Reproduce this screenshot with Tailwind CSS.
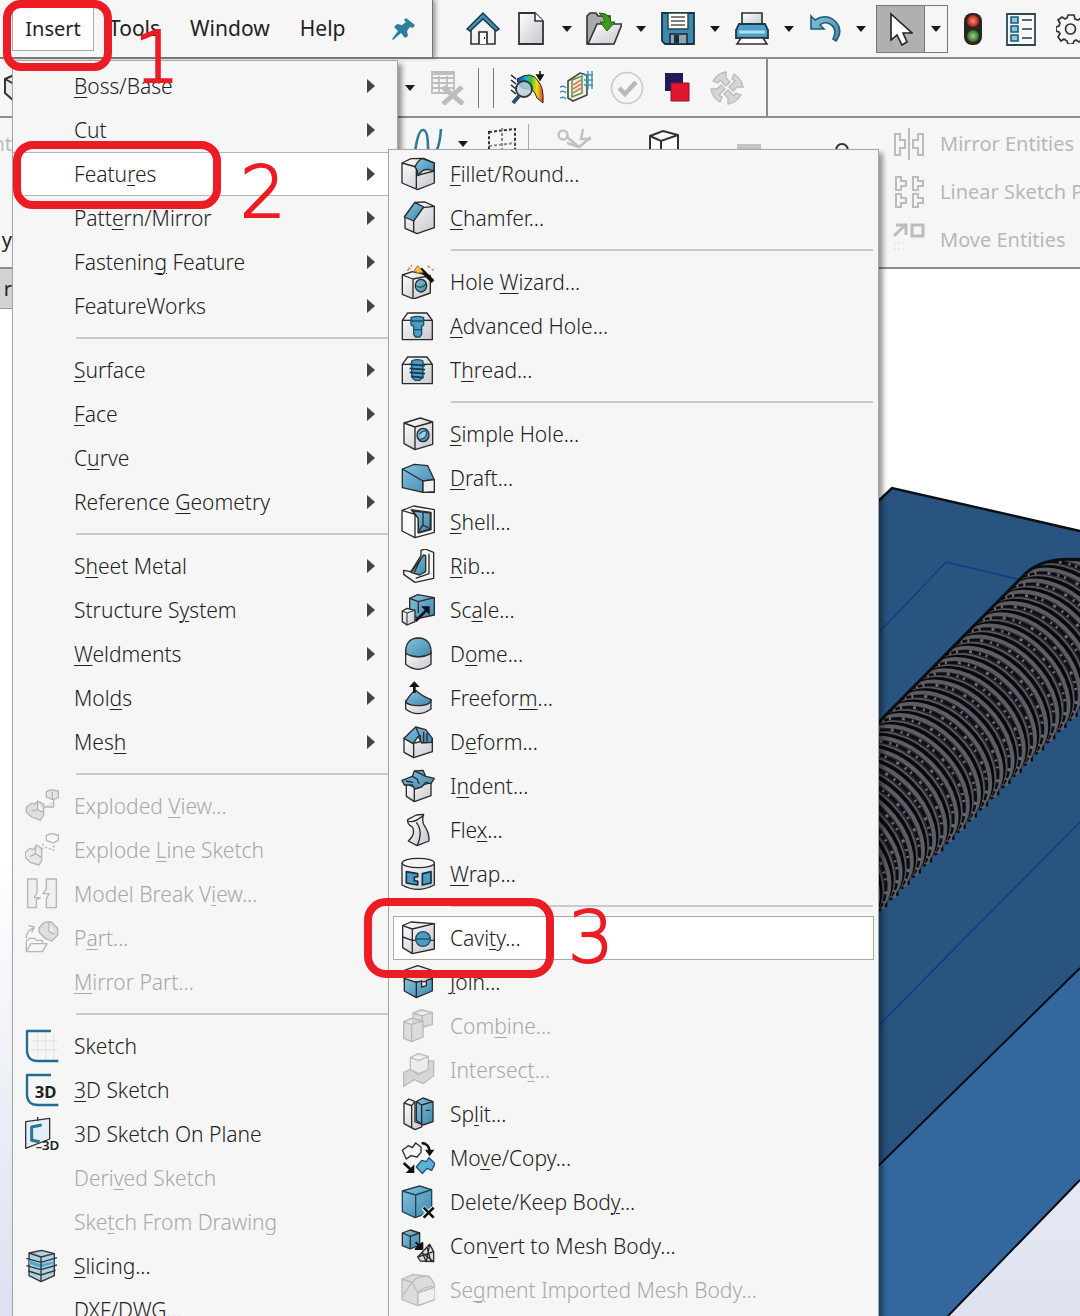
<!DOCTYPE html>
<html lang="en">
<head>
<meta charset="utf-8">
<meta name="viewport" content="width=device-width, initial-scale=1">
<title>Insert menu</title>
<script src="https://cdn.jsdelivr.net/npm/@tailwindcss/browser@4"></script>
</head>
<body class="bg-white">
<svg class="absolute size-0" aria-hidden="true">
  <defs>
    <linearGradient id="gb" x1="0" y1="0" x2="1" y2="1"><stop offset="0" stop-color="#86c2df"/><stop offset="1" stop-color="#3f88ad"/></linearGradient>
    <linearGradient id="gw" x1="0" y1="0" x2="1" y2="1"><stop offset="0" stop-color="#ffffff"/><stop offset="1" stop-color="#c6c6cd"/></linearGradient>
    <linearGradient id="rainbow"><stop offset="0" stop-color="#1d2fa8"/><stop offset=".35" stop-color="#18b7c9"/><stop offset=".55" stop-color="#3ec22e"/><stop offset=".75" stop-color="#f5dc1a"/><stop offset="1" stop-color="#ee3a1b"/></linearGradient>
    <radialGradient id="red"><stop offset="0" stop-color="#ff8a7a"/><stop offset="1" stop-color="#a81f16"/></radialGradient>
    <radialGradient id="green"><stop offset="0" stop-color="#9fd08e"/><stop offset="1" stop-color="#2c6b25"/></radialGradient>
    <symbol id="down" viewBox="0 0 10 6"><path d="M0 0h10L5 6z" fill="#1a1a1a" stroke="none"/></symbol>
    <symbol id="sub" viewBox="0 0 8 14"><path d="M0 0L8 7L0 14z" fill="#444" stroke="none"/></symbol>
  </defs>
</svg>

<div class="relative h-screen overflow-hidden bg-white font-['Noto_Sans',sans-serif] text-[20px] leading-none text-[#222]">

  <!-- Graphics area -->
  <main class="absolute inset-0 bg-linear-to-b from-white from-65% to-[#dde1f0]">
    <svg class="absolute top-0 left-0 h-[1316px] w-[1080px] overflow-hidden" viewBox="0 0 1080 1316" fill="none">
      <path d="M870 509L892 488L1080 531V968L870 1174z" fill="#29547f"/>
      <path d="M870 509L892 488L1080 531" stroke="#0b0f16" stroke-width="2.5"/>
      <path d="M870 1174L1080 968V1180L948 1316H870z" fill="#33679e"/>
      <path d="M870 1174L1080 968M948 1316L1080 1180" stroke="#080c12" stroke-width="2"/>
      <path d="M870 642L946 562L1030 582M870 1034L1080 822" stroke="#123c86" stroke-width="1.5"/>
      <path d="M870 732L1030 571Q1050 556 1080 560V703L870 910z" fill="#1b1c22"/>
      <g id="coil"></g>
      <path d="M870 731L1026 573Q1046 556 1080 560" stroke="#0c0d11" stroke-width="3"/>
    </svg>
  </main>

  <header class="relative">
    <!-- Menu bar and standard toolbar -->
    <div class="flex h-[59px] border-b-2 border-[#8c8c8c] bg-[#f6f6f6]">
      <nav class="flex h-[58px] w-[433px] shrink-0 items-center border-r border-b border-[#777] pl-3 text-[21px] shadow-[3px_0_4px_#0005]">
        <button class="h-11 w-[82px] border border-[#aaa] bg-white text-[20px]">Insert</button>
        <button class="px-[15px]">Tools</button>
        <button class="px-[15px]">Window</button>
        <button class="px-[15px]">Help</button>
        <button class="mr-4 ml-auto" aria-label="Pin menu"><svg class="size-6" viewBox="0 0 24 24" fill="#2d7f9f"><path d="M14 1L23 8L21 11L18 10L15 14L16 19L13 21L9 16L1 23L0 22L6 14L2 10L5 7L10 8L14 5L12 3z"/></svg></button>
      </nav>
      <div class="flex grow items-center gap-3.5 overflow-hidden pl-[33px] [&_button]:shrink-0">
        <button aria-label="Home"><svg class="size-[34px]" viewBox="0 0 34 34" fill="none"><path d="M5 16V32H29V16L17 6z" fill="#f2f2f2" stroke="#333" stroke-width="1.6"/><path d="M13 32V20H21V32" fill="#fff" stroke="#222" stroke-width="1.6"/><path d="M18 26h1" stroke="#222" stroke-width="2"/><path d="M1 17L17 1L33 17L30 19L17 7L4 19z" fill="#438fb4" stroke="#16384a" stroke-width="1.4"/></svg></button>
        <button aria-label="New"><svg class="size-[34px]" viewBox="0 0 34 34"><path d="M5 1H21L29 9V32H5z" fill="url(#gw)" stroke="#333" stroke-width="1.8"/><path d="M21 1V9H29" fill="#fff" stroke="#333" stroke-width="1.6"/></svg></button>
        <button aria-label="New options"><svg class="h-1.5 w-2.5"><use href="#down"/></svg></button>
        <button aria-label="Open"><svg class="h-[34px] w-9" viewBox="0 0 36 34"><path d="M1 32V4L4 1H10L12 4H24V32z" fill="#aaa" stroke="#333" stroke-width="1.6"/><path d="M2 32L11 12H36L28 32z" fill="url(#gw)" stroke="#333" stroke-width="1.6"/><path d="M13 1Q24 1 25 10H29L21 19L14 10H19Q18 4 13 1z" fill="#3d9a1f" stroke="#1f6210"/></svg></button>
        <button aria-label="Open options"><svg class="h-1.5 w-2.5"><use href="#down"/></svg></button>
        <button aria-label="Save"><svg class="h-[34px] w-9" viewBox="0 0 36 34"><path d="M2 1H34V32H5L2 29z" fill="#4089ae" stroke="#173344" stroke-width="1.8"/><path d="M8 1H28V17H8z" fill="#fff" stroke="#244" stroke-width="1.4"/><path d="M11 5H25M11 9H25M11 13H25" stroke="#555" stroke-width="1.5"/><path d="M10 22H27V32H10z" fill="#8fa5b0" stroke="#122a38" stroke-width="1.5"/><path d="M14 23H19V31H14z" fill="#1c2e3a"/></svg></button>
        <button aria-label="Save options"><svg class="h-1.5 w-2.5"><use href="#down"/></svg></button>
        <button aria-label="Print"><svg class="h-[34px] w-9" viewBox="0 0 36 34"><path d="M8 14V1H28V14" fill="url(#gw)" stroke="#333" stroke-width="1.7"/><path d="M5 12H31L34 18V26H2V18z" fill="#4e9fc4" stroke="#173c50" stroke-width="1.8"/><path d="M5 20H31" stroke="#aee0f2" stroke-width="3"/><path d="M7 26H29L33 32H3z" fill="#fff" stroke="#333" stroke-width="1.6"/></svg></button>
        <button aria-label="Print options"><svg class="h-1.5 w-2.5"><use href="#down"/></svg></button>
        <button aria-label="Undo"><svg class="size-[34px]" viewBox="0 0 34 34"><path d="M3 4L7 8Q18 1 27 9Q36 18 28 29L25 27Q30 17 22 12Q16 9 12 13L16 17H3z" fill="url(#gb)" stroke="#235a76" stroke-width="1.6"/></svg></button>
        <button aria-label="Undo options"><svg class="h-1.5 w-2.5"><use href="#down"/></svg></button>
        <div class="-ml-1 flex h-12 w-[72px] shrink-0 border border-[#777]">
          <button class="grid w-12 place-items-center border-r border-[#777] bg-[#b0b0b0]" aria-label="Select"><svg class="h-[34px] w-6" viewBox="0 0 24 34"><path d="M2 2V28L8 23L13 33L18 30L14 21H23z" fill="#fff" stroke="#222" stroke-width="1.6"/></svg></button>
          <button class="grid grow place-items-center" aria-label="Select options"><svg class="h-1.5 w-2.5"><use href="#down"/></svg></button>
        </div>
        <button aria-label="Rebuild"><svg class="h-[34px] w-[22px]" viewBox="0 0 22 34"><rect x="2" y="1" width="18" height="32" rx="8" fill="#2b2420"/><circle cx="11" cy="9" r="6" fill="url(#red)"/><circle cx="11" cy="24" r="6" fill="url(#green)"/></svg></button>
        <button aria-label="Properties"><svg class="h-[34px] w-11" viewBox="0 0 44 34"><path d="M9 2H37V33H9z" fill="#f6f9fa" stroke="#2f4550" stroke-width="1.8"/><path d="M13 5H20V11H13zM13 14H20V20H13zM13 23H20V29H13z" fill="#8bc6de" stroke="#1c5a78" stroke-width="1.6"/><path d="M24 8H34M24 17H34M24 26H34" stroke="#333" stroke-width="1.6"/></svg></button>
        <button aria-label="Options"><svg class="size-[30px]" viewBox="0 0 30 30" fill="none" stroke="#333" stroke-width="1.7"><path d="M12 1H18L19 5L22 6L25 4L28 8L26 11L27 13L30 14V18L26 19L25 22L27 25L23 28L20 26L18 27L17 30H12L11 27L8 25L5 27L2 23L4 20L3 18L0 17V13L3 12L4 9L2 6L6 3L9 5L11 4z"/><circle cx="14.500" cy="15" r="5"/></svg></button>
      </div>
    </div>

    <!-- Secondary toolbar -->
    <div class="flex h-[59px] items-center gap-4 border-b-2 border-[#8c8c8c] bg-[#f6f6f6] pl-1 [&_button]:shrink-0">
      <button class="w-[385px]" aria-label="Body"><svg class="h-7 w-6" viewBox="0 0 24 28" fill="#ececec" stroke="#333" stroke-width="2"><path d="M1 5L10 1L22 5V22L10 27L1 19zM1 5L10 10"/></svg></button>
      <button aria-label="Display options"><svg class="h-1.5 w-2.5"><use href="#down"/></svg></button>
      <button disabled aria-label="Delete table"><svg class="size-[34px]" viewBox="0 0 34 34" fill="none" stroke="#bdbdbd" stroke-width="1.8"><path d="M1 1H23V22H1zM1 7H23M1 12H23M1 17H23M8 5V22M16 5V22M2 3H22"/><path d="M12 16L32 33M31 16L12 33" stroke-width="5"/></svg></button>
      <div class="-ml-[3px] h-10 w-4 shrink-0 border-x border-[#777]"></div>
      <button aria-label="Curvature"><svg class="size-[34px]" viewBox="0 0 34 34" fill="none"><path d="M7 8Q22 -1 28 10Q34 16 33 32L27 27Q24 17 17 18Q9 18 7 8z" fill="url(#rainbow)" stroke="#222"/><path d="M1 4L6 8M1 9L6 13M1 14L6 18M1 19L6 23" stroke="#222" stroke-width="1.6"/><circle cx="14" cy="18" r="8" fill="#b9d2dfcc" stroke="#333" stroke-width="1.8"/><path d="M9 25L3 32" stroke="#1d5270" stroke-width="4"/><path d="M30 0V6M27 4H33L30 9z" stroke="#111" stroke-width="1.6" fill="#111"/></svg></button>
      <button aria-label="Flow simulation"><svg class="size-[34px]" viewBox="0 0 34 34" fill="none"><path d="M8 10L20 2L27 4V24L13 30L8 27z" fill="#f4eee4" stroke="#444" stroke-width="1.6"/><path d="M12 9L22 5V22L12 26z" stroke="#4b9a3e" stroke-width="1.5"/><path d="M13 14L21 9M13 18L21 13M13 22L21 17" stroke="#e07060" stroke-width="1.6"/><path d="M24 4H33M24 9H33M24 14H33M28 0V18M32 0V18M0 16Q4 14 6 17M0 21Q4 19 6 22M0 27Q4 25 6 28" stroke="#3b93bd" stroke-width="1.5"/></svg></button>
      <button disabled aria-label="Check"><svg class="size-[34px]" viewBox="0 0 34 34" fill="none"><circle cx="17" cy="17" r="15.500" stroke="#c9c9c9" stroke-width="1.6"/><path d="M9 17L15 23L26 11" stroke="#b9b9b9" stroke-width="4.500"/></svg></button>
      <button aria-label="Compare"><svg class="size-[34px]" viewBox="0 0 34 34"><path d="M5 2H23V20H5z" fill="#1f1a5c"/><path d="M11 12H29V30H11z" fill="#e0162f" stroke="#8c1230"/></svg></button>
      <button disabled aria-label="Update"><svg class="size-[34px]" viewBox="0 0 34 34" fill="#d6d6d6" stroke="#bcbcbc" stroke-width="1.4"><path d="M3 10Q8 2 16 1V7L20 11L16 15L10 9L8 12zM24 3Q32 8 33 16H27L23 20L19 16L25 10L22 8zM31 24Q26 32 18 33V27L14 23L18 19L24 25L26 22zM10 31Q2 26 1 18H7L11 14L15 18L9 24L12 26z"/></svg></button>
      <div class="ml-1.5 h-full border-l-2 border-[#8c8c8c]"></div>
    </div>

    <!-- Sketch ribbon -->
    <div class="flex h-[151px] items-start border-b-2 border-[#8c8c8c] bg-[#f6f6f6] pt-0.5">
      <div class="flex w-3 shrink-0 flex-col items-end overflow-hidden whitespace-nowrap [&>span]:h-12 [&>span]:leading-[48px]"><span class="text-[#bbb]">nt</span><span></span><span>y</span></div>
      <div class="flex h-12 w-[839px] shrink-0 items-center pl-[402px] [&>*]:shrink-0">
        <svg class="h-8 w-[30px]" viewBox="0 0 30 32" fill="none" stroke="#2b7a9c" stroke-width="2.600"><path d="M1 24Q4 2 9 2Q14 2 14 20Q16 32 22 24Q26 16 27 1"/></svg>
        <svg class="ml-3.5 h-1.5 w-2.5"><use href="#down"/></svg>
        <svg class="ml-5 h-8 w-7" viewBox="0 0 28 32" fill="none" stroke="#333" stroke-width="2" stroke-dasharray="3 2"><path d="M1 4L27 1V30H1z"/><path d="M14 0V30M1 18L27 15" stroke="#888"/></svg>
        <div class="ml-3 h-10 border-l border-[#aaa]"></div>
        <svg class="ml-7 size-[34px]" viewBox="0 0 34 34" fill="none" stroke="#c2c2c2" stroke-width="2.500"><circle cx="6" cy="8" r="4.500"/><path d="M10 10L22 20L34 10M26 2L24 12H34M22 20L10 16"/></svg>
        <svg class="ml-[58px] h-7 w-[30px]" viewBox="0 0 30 28" fill="#fdfdfd" stroke="#333" stroke-width="2"><path d="M1 6L14 1L29 5V26H1zM1 6L12 11L29 5M12 11V26"/></svg>
        <svg class="ml-[58px] h-4 w-6" viewBox="0 0 24 16" fill="#c4c4c4"><path d="M0 8H24V16H0z"/></svg>
        <svg class="ml-[74px] h-4 w-3.5" viewBox="0 0 14 16" fill="none" stroke="#333" stroke-width="2"><path d="M1 14Q2 8 7 8Q12 8 13 14"/></svg>
      </div>
      <div class="ml-[41px] flex flex-col overflow-hidden whitespace-nowrap text-[#b8b8b8] [&>button]:flex [&>button]:h-12 [&>button]:items-center [&>button]:gap-3.5 [&_svg]:size-[34px] [&_svg]:shrink-0">
        <button disabled><svg viewBox="0 0 34 34" fill="none" stroke="#bcbcbc" stroke-width="2"><path d="M17 1V33M3 7H8V13H13V21H8V28H3zM31 7H26V13H21V21H26V28H31z"/></svg>Mirror Entities</button>
        <button disabled><svg viewBox="0 0 34 34" fill="none" stroke="#bcbcbc" stroke-width="2"><path d="M4 2H9V6H14V11H9V15H4zM21 2H26V6H31V11H26V15H21zM4 19H9V23H14V28H9V32H4zM21 19H26V23H31V28H26V32H21z"/></svg>Linear Sketch Pattern</button>
        <button disabled><svg viewBox="0 0 34 34" fill="none" stroke="#bcbcbc" stroke-width="3"><path d="M2 13L12 3M4 2H14V12M20 2H31V13H20z"/><path d="M2 20H13M2 26H13" stroke="#e6e6e6" stroke-width="1.500" stroke-dasharray="2 2"/></svg>Move Entities</button>
      </div>
    </div>
    <div class="h-10 w-3 border-b border-[#999] bg-[#d2d2d2] text-right leading-10">r</div>
  </header>

  <!-- Insert menu -->
  <div role="menu" aria-label="Insert" class="absolute top-[60px] left-3 w-[386px] border border-[#a5a5a5] bg-[#f6f6f6] fill-none stroke-[#b5b5b5] stroke-3 pt-[3px] text-[21px] font-light shadow-[4px_4px_5px_#0006] [stroke-linejoin:round] [&>button]:grid [&>button]:h-11 [&>button]:w-full [&>button]:grid-cols-[61px_1fr_auto] [&>button]:items-center [&>button]:text-left [&_button:disabled]:text-[#a8a8a8] [&_hr]:my-[9px] [&_hr]:ml-[63px] [&_hr]:border-t-2 [&_hr]:border-[#cacaca] [&_span]:col-start-2 [&_u]:decoration-1 [&_u]:underline-offset-3">
    <button><span><u>B</u>oss/Base</span><svg class="mr-[22px] h-3.5 w-2"><use href="#sub"/></svg></button>
    <button><span>Cut</span><svg class="mr-[22px] h-3.5 w-2"><use href="#sub"/></svg></button>
    <button class="border-y border-[#b5b5b5] bg-white"><span>Featu<u>r</u>es</span><svg class="mr-[22px] h-3.5 w-2"><use href="#sub"/></svg></button>
    <button><span>Patt<u>e</u>rn/Mirror</span><svg class="mr-[22px] h-3.5 w-2"><use href="#sub"/></svg></button>
    <button><span>Fastenin<u>g</u> Feature</span><svg class="mr-[22px] h-3.5 w-2"><use href="#sub"/></svg></button>
    <button><span>FeatureWorks</span><svg class="mr-[22px] h-3.5 w-2"><use href="#sub"/></svg></button>
    <hr>
    <button><span><u>S</u>urface</span><svg class="mr-[22px] h-3.5 w-2"><use href="#sub"/></svg></button>
    <button><span><u>F</u>ace</span><svg class="mr-[22px] h-3.5 w-2"><use href="#sub"/></svg></button>
    <button><span>C<u>u</u>rve</span><svg class="mr-[22px] h-3.5 w-2"><use href="#sub"/></svg></button>
    <button><span>Reference <u>G</u>eometry</span><svg class="mr-[22px] h-3.5 w-2"><use href="#sub"/></svg></button>
    <hr>
    <button><span>S<u>h</u>eet Metal</span><svg class="mr-[22px] h-3.5 w-2"><use href="#sub"/></svg></button>
    <button><span>Structure S<u>y</u>stem</span><svg class="mr-[22px] h-3.5 w-2"><use href="#sub"/></svg></button>
    <button><span><u>W</u>eldments</span><svg class="mr-[22px] h-3.5 w-2"><use href="#sub"/></svg></button>
    <button><span>Mol<u>d</u>s</span><svg class="mr-[22px] h-3.5 w-2"><use href="#sub"/></svg></button>
    <button><span>Mes<u>h</u></span><svg class="mr-[22px] h-3.5 w-2"><use href="#sub"/></svg></button>
    <hr>
    <button disabled><svg class="ml-3 size-[34px]" viewBox="0 0 102 102"><path d="M4 55L20 42L30 46L38 36L56 46V78L46 94L20 84L4 70zM38 36V62L56 70M20 66L38 62" fill="#dedede" stroke-width="4"/><path d="M64 8L76 2L100 6V26L84 32L64 24zM82 8V30M86 34V54H58" stroke-width="4" fill="#e6e6e6"/></svg><span>Exploded <u>V</u>iew...</span></button>
    <button disabled><svg class="ml-3 size-[34px]" viewBox="0 0 102 102"><path d="M1 58L16 46L26 50L34 36L50 46V82L42 96L16 88L1 74zM32 40V62L50 74M16 70L32 62" fill="#e8e8e8" stroke-width="4"/><path d="M64 8L76 2L100 6V22L84 30L64 22z" stroke-width="4"/><path d="M54 32V48M60 42L86 52V32" stroke-width="4" stroke-dasharray="7 5"/></svg><span>Explode <u>L</u>ine Sketch</span></button>
    <button disabled><svg class="ml-3 size-[34px]" viewBox="0 0 102 102"><path d="M8 6H36V48L28 62H46L34 68V92H8zM94 6H64V36L54 50H72L64 66V92H94z" stroke-width="4" fill="#f0f0f0"/></svg><span>Model Break V<u>i</u>ew...</span></button>
    <button disabled><svg class="ml-3 size-[34px]" viewBox="0 0 102 102"><path d="M42 20L58 4L78 2L98 22V42L80 60L60 52L42 34zM72 4V30L88 40" fill="#dedede" stroke-width="4"/><path d="M4 92V60L14 52H30L34 58H52V68H66L52 92zM6 88L18 68H52M4 52Q4 28 24 22M10 14L28 18L20 34" stroke-width="4"/></svg><span>P<u>a</u>rt...</span></button>
    <button disabled><span><u>M</u>irror Part...</span></button>
    <hr>
    <button><svg class="ml-3 size-[34px]" viewBox="0 0 102 102"><path d="M38 12V84M62 12V90M86 12V90M20 36H98M20 62H98" stroke="#e0e0e4" stroke-width="3"/><path d="M78 6H6V66Q8 96 38 96H100" stroke="#216d92" stroke-width="7"/></svg><span>Sketch</span></button>
    <button><svg class="ml-3 size-[34px]" viewBox="0 0 102 102"><path d="M78 6H6V66Q8 96 38 96H100" stroke="#216d92" stroke-width="7"/><text x="29" y="74" class="fill-[#222] stroke-none font-['Noto_Sans'] text-[50px] font-bold">3D</text></svg><span><u>3</u>D Sketch</span></button>
    <button><svg class="ml-3 size-[34px] overflow-visible" viewBox="0 0 102 102"><path d="M2 14L74 4V66L2 94z" fill="#e2eff6" stroke="#333" stroke-width="4"/><path d="M50 24L20 30V70L44 74" stroke="#2b7395" stroke-width="9"/><path d="M38 0V12M34 92H50" stroke="#333" stroke-width="4"/><text x="51" y="98" class="fill-[#222] stroke-none font-['Noto_Sans'] text-[40px] font-semibold">3D</text></svg><span>3D Sketch On Plane</span></button>
    <button disabled><span>Deri<u>v</u>ed Sketch</span></button>
    <button disabled><span>Ske<u>t</u>ch From Drawing</span></button>
    <button><svg class="ml-3 size-[34px]" viewBox="0 0 102 102"><path d="M12 12L50 4L88 14V80L48 98L12 80z" fill="#b5cfdd" stroke="#333" stroke-width="4"/><path d="M12 34L48 46L88 36V42L48 56L12 44z" fill="#5aa7cb" stroke="none"/><path d="M12 12L48 24L88 14M48 24V98M4 28L48 40L96 26M4 50L48 62L96 48M10 66L48 78L92 64" stroke="#263c48" stroke-width="4"/></svg><span><u>S</u>licing...</span></button>
    <button><span>DXF/DWG...</span></button>
  </div>

  <!-- Features submenu -->
  <div role="menu" aria-label="Features" class="absolute top-[149px] left-[388px] h-[1200px] w-[491px] border border-[#a5a5a5] bg-[#f6f6f6] fill-none stroke-[#2b2b2b] stroke-4 pt-0.5 text-[21px] font-light shadow-[4px_4px_5px_#0006] [stroke-linejoin:round] [&>button]:grid [&>button]:h-11 [&>button]:items-center [&>button]:text-left [&_button:disabled]:text-[#a8a8a8] [&_hr]:my-[9px] [&_hr]:mr-[5px] [&_hr]:ml-[62px] [&_hr]:border-t-2 [&_hr]:border-[#cacaca] [&_u]:decoration-1 [&_u]:underline-offset-3">
    <button class="w-full grid-cols-[61px_1fr]"><svg class="ml-3 size-[34px]" viewBox="0 0 102 102"><path d="M3 18L30 5L68 4L100 18V78L50 98L3 78z" fill="url(#gw)"/><path d="M3 18L46 30V96M46 56L100 42"/><path d="M42 30Q50 10 64 5L100 18L98 42Q80 34 66 40L50 56Q52 40 42 30z" fill="url(#gb)"/></svg><span><u>F</u>illet/Round...</span></button>
    <button class="w-full grid-cols-[61px_1fr]"><svg class="ml-3 size-[34px]" viewBox="0 0 102 102"><path d="M42 4L72 3L100 16V80L48 98L12 82V46z" fill="url(#gw)"/><path d="M38 60V94M66 20L100 16"/><path d="M42 4L68 18L38 60L10 48z" fill="url(#gb)"/></svg><span><u>C</u>hamfer...</span></button>
    <hr>
    <button class="w-full grid-cols-[61px_1fr]"><svg class="ml-3 size-[34px]" viewBox="0 0 102 102"><path d="M4 30L34 20L88 32V84L38 102L4 88z" fill="url(#gw)"/><path d="M4 30L36 42V100M36 42L88 32"/><ellipse cx="60" cy="62" rx="17" ry="19" fill="url(#gb)"/><path d="M46 62Q60 74 76 56" stroke="#163"/><path d="M58 12L96 50" stroke="#111" stroke-width="12"/><path d="M40 16L50 2L60 14L66 22L50 24z" fill="#f5c443" stroke="#a87a18" stroke-width="3"/><path d="M22 8l6 4M30 0l2 5M80 2l6 6M92 12l6 4M18 16l6-2" stroke="#d07a40"/></svg><span>Hole <u>W</u>izard...</span></button>
    <button class="w-full grid-cols-[61px_1fr]"><svg class="ml-3 size-[34px]" viewBox="0 0 102 102"><path d="M4 34L20 12H78L94 34V92H4z" fill="url(#gw)"/><path d="M4 34H94"/><path d="M30 26Q48 18 68 26V48L62 52V76L56 84H44L38 76V52L30 48z" fill="#4b9cc2" stroke="#1d4c66"/><path d="M30 36H68M38 62H60" stroke="#1d4c66"/></svg><span><u>A</u>dvanced Hole...</span></button>
    <button class="w-full grid-cols-[61px_1fr]"><svg class="ml-3 size-[34px]" viewBox="0 0 102 102"><path d="M4 34L20 12H78L94 34V92H4z" fill="url(#gw)"/><path d="M4 34H94"/><path d="M32 24Q48 16 66 24V72L56 82H42L32 72z" fill="#4b9cc2" stroke="#1d4c66"/><path d="M26 34L72 38M26 46L72 50M26 58L72 62M30 70L68 74" stroke="#14384c" stroke-width="5"/></svg><span>T<u>h</u>read...</span></button>
    <hr>
    <button class="w-full grid-cols-[61px_1fr]"><svg class="ml-3 size-[34px]" viewBox="0 0 102 102"><path d="M9 18L58 3L95 15V82L42 98L9 80z" fill="url(#gw)"/><path d="M9 18L42 30V98M42 30L95 15"/><ellipse cx="66" cy="54" rx="18" ry="20" fill="url(#gb)"/><path d="M56 66Q76 68 78 42Q62 40 56 52" fill="#9fd0e6" stroke="#1d5270"/></svg><span><u>S</u>imple Hole...</span></button>
    <button class="w-full grid-cols-[61px_1fr]"><svg class="ml-3 size-[34px]" viewBox="0 0 102 102"><path d="M4 24L40 10L80 14L100 56V94H66L4 80z" fill="url(#gb)"/><path d="M4 24L66 60L100 56M66 60V94"/><path d="M66 60L100 56V92L66 94z" fill="#f2f2f2"/></svg><span><u>D</u>raft...</span></button>
    <button class="w-full grid-cols-[61px_1fr]"><svg class="ml-3 size-[34px]" viewBox="0 0 102 102"><path d="M3 16L38 3L100 14V82L42 98L3 78z" fill="#fafafa"/><path d="M3 16L42 28V98M30 14L90 22V74L52 84V40z" stroke-width="4"/><path d="M36 18L88 24V72L52 82V40z" fill="url(#gb)"/><path d="M66 24V60L88 72M66 60L52 80"/></svg><span><u>S</u>hell...</span></button>
    <button class="w-full grid-cols-[61px_1fr]"><svg class="ml-3 size-[34px]" viewBox="0 0 102 102"><path d="M60 4L72 0L98 10V88L42 100L8 76V64L30 68L60 20z" fill="#f4f4f4"/><path d="M68 18L30 70L56 78L74 68V20z" fill="url(#gb)"/><path d="M84 14V74L44 88M58 32L40 70"/></svg><span><u>R</u>ib...</span></button>
    <button class="w-full grid-cols-[61px_1fr]"><svg class="ml-3 size-[34px]" viewBox="0 0 102 102"><path d="M26 16L50 5L100 14V66L52 76L26 62z" fill="url(#gb)"/><path d="M26 16L52 26L100 14M52 26V60"/><path d="M4 54L18 46L42 52V86L18 96L4 86z" fill="url(#gw)"/><path d="M4 54L18 60L42 52M18 60V94" stroke-width="3"/><path d="M44 84L78 50" stroke="#111" stroke-width="8"/><path d="M60 40H86V66z" fill="#111" stroke="none"/></svg><span>Sc<u>a</u>le...</span></button>
    <button class="w-full grid-cols-[61px_1fr]"><svg class="ml-3 size-[34px]" viewBox="0 0 102 102"><path d="M14 44V82Q50 112 90 82V44z" fill="url(#gw)"/><path d="M14 50Q12 4 52 3Q92 4 90 50Q52 70 14 50z" fill="url(#gb)"/></svg><span>D<u>o</u>me...</span></button>
    <button class="w-full grid-cols-[61px_1fr]"><svg class="ml-3 size-[34px]" viewBox="0 0 102 102"><path d="M14 60V84Q50 112 90 84V56z" fill="url(#gw)"/><path d="M14 62Q34 30 44 28Q60 44 90 56Q90 72 52 74Q20 74 14 62z" fill="url(#gb)"/><path d="M40 36V12" stroke="#111" stroke-width="8"/><path d="M24 18L40 1L56 18z" fill="#111" stroke="none"/></svg><span>Freefor<u>m</u>...</span></button>
    <button class="w-full grid-cols-[61px_1fr]"><svg class="ml-3 size-[34px]" viewBox="0 0 102 102"><path d="M9 40L42 54L94 40V80L38 98L9 82z" fill="url(#gw)"/><path d="M38 54V98"/><path d="M9 40L44 6L74 14L94 40L92 52L62 54L52 34L36 56z" fill="url(#gb)"/><path d="M44 6L56 34M58 30V52M68 20V52M78 24V50"/></svg><span>D<u>e</u>form...</span></button>
    <button class="w-full grid-cols-[61px_1fr]"><svg class="ml-3 size-[34px]" viewBox="0 0 102 102"><path d="M16 44L42 56L90 40V80L40 98L16 82z" fill="url(#gw)"/><path d="M40 56V98"/><path d="M3 34L34 22L40 6L66 4L74 22L100 28L90 44L74 40L62 54L42 60L34 48L10 48z" fill="url(#gb)"/><path d="M34 22L48 30L54 44M40 6L58 14L74 22M14 36L36 40"/></svg><span>I<u>n</u>dent...</span></button>
    <button class="w-full grid-cols-[61px_1fr]"><svg class="ml-3 size-[34px]" viewBox="0 0 102 102"><path d="M20 20L46 6L68 4Q62 20 68 34Q86 60 84 84L48 98L22 84Q46 62 34 42Q18 34 20 20z" fill="url(#gw)"/><path d="M20 24Q40 32 68 6M46 28Q68 56 48 98" stroke-width="4"/></svg><span>Fle<u>x</u>...</span></button>
    <button class="w-full grid-cols-[61px_1fr]"><svg class="ml-3 size-[34px]" viewBox="0 0 102 102"><path d="M3 18V84Q50 110 100 84V18z" fill="url(#gw)"/><ellipse cx="52" cy="18" rx="48" ry="14" fill="#f5f5f5"/><path d="M16 44L50 50V60H40V72H50V84L16 78zM64 50L90 44V78L64 84z" fill="#4b9cc2" stroke="#122f40" stroke-width="5"/></svg><span><u>W</u>rap...</span></button>
    <hr>
    <button class="mx-1 w-[481px] grid-cols-[56px_1fr] border border-[#aaa] bg-white"><svg class="ml-[7px] size-[34px]" viewBox="0 0 102 102"><path d="M5 14L30 3L100 8V84L34 98L5 80z" fill="url(#gw)"/><path d="M5 14L34 24L100 8M34 24V98M5 48L34 58H100"/><circle cx="66" cy="54" r="22" fill="#4b9cc2" stroke="#1d4c66"/><path d="M44 54H88" stroke="#1d4c66"/></svg><span>Cavi<u>t</u>y...</span></button>
    <button class="w-full grid-cols-[61px_1fr]"><svg class="ml-3 size-[34px]" viewBox="0 0 102 102"><path d="M10 16L50 2L94 16V50H10z" fill="url(#gw)"/><path d="M10 40L46 52V98L10 78zM46 52L62 48V66L76 62V46L94 40V78L46 98z" fill="url(#gb)"/></svg><span><u>J</u>oin...</span></button>
    <button disabled class="w-full grid-cols-[61px_1fr]"><svg class="ml-3 size-[34px]" viewBox="0 0 102 102"><g fill="#dcdcdc" stroke="#b9b9b9"><path d="M36 12L60 2L94 10V46L66 54L36 46zM36 12L64 20L94 10M64 20V50"/><path d="M8 38L30 28L66 36V84L32 98L8 88zM8 38L32 46L66 36M32 46V98"/></g></svg><span>Com<u>b</u>ine...</span></button>
    <button disabled class="w-full grid-cols-[61px_1fr]"><svg class="ml-3 size-[34px]" viewBox="0 0 102 102"><g fill="#d6d6d6" stroke="#bcbcbc"><path d="M8 58L30 48L50 66L70 56L86 24H98V68L66 92L40 80L8 100z"/><path d="M28 14L52 2L82 10V50L54 62L28 50zM28 14L54 22L82 10" fill="#ececec"/></g></svg><span>Intersec<u>t</u>...</span></button>
    <button class="w-full grid-cols-[61px_1fr]"><svg class="ml-3 size-[34px]" viewBox="0 0 102 102"><path d="M46 14L66 3L96 14V74L66 84L46 70z" fill="url(#gb)"/><path d="M46 14L62 24L96 14M62 24V82M74 40H88"/><path d="M9 18L24 6L42 14V74L62 82V90L42 98L9 80z" fill="url(#gw)"/><path d="M9 18L32 26V92M32 26L42 14"/></svg><span>Sp<u>l</u>it...</span></button>
    <button class="w-full grid-cols-[61px_1fr]"><svg class="ml-3 size-[34px]" viewBox="0 0 102 102"><path d="M4 28L22 14L34 20L44 6L60 18V34L48 48L30 44L16 54z" fill="#f6f6f6"/><path d="M46 78L62 58L76 62L84 50L102 68L92 88L78 82L64 98z" fill="#5fb0d8" stroke="#1d5270"/><path d="M62 6Q84 8 86 30" stroke="#111" stroke-width="7"/><path d="M72 26H100L86 46zM40 96H14L40 70z" fill="#111" stroke="none"/><path d="M8 66L34 90" stroke="#111" stroke-width="8"/></svg><span>Mo<u>v</u>e/Copy...</span></button>
    <button class="w-full grid-cols-[61px_1fr]"><svg class="ml-3 size-[34px]" viewBox="0 0 102 102"><path d="M4 18L56 3L92 14V80L42 98L4 80z" fill="url(#gb)" stroke="#1d4458"/><path d="M4 18L44 30L92 14M44 30V98" stroke="#1d4458"/><path d="M66 68L98 98M98 68L66 98" stroke="#f6f6f6" stroke-width="14"/><path d="M68 68L98 98M98 68L68 98" stroke="#111" stroke-width="8"/></svg><span>Delete/Keep Bod<u>y</u>...</span></button>
    <button class="w-full grid-cols-[61px_1fr]"><svg class="ml-3 size-[34px]" viewBox="0 0 102 102"><path d="M4 12L28 3L56 12V48L28 60L4 50z" fill="url(#gb)"/><path d="M4 12L28 22L56 12M28 22V58"/><path d="M44 40L62 56M64 42V60H44z" stroke="#111" stroke-width="6" fill="#111"/><path d="M50 84L86 46L98 68V98L58 96z" fill="#ddd"/><path d="M50 84L98 68M86 46L76 98L64 72L98 98M78 56L90 98"/></svg><span>Con<u>v</u>ert to Mesh Body...</span></button>
    <button disabled class="w-full grid-cols-[61px_1fr]"><svg class="ml-3 size-[34px]" viewBox="0 0 102 102"><g fill="#dcdcdc" stroke="#bcbcbc"><path d="M3 18L36 4L84 10Q98 24 102 42V80L50 98L3 80z"/><path d="M50 60L102 42V80L50 98z" fill="#f0f0f0"/><path d="M3 18L34 28L50 60V98M34 28Q50 6 84 10M50 60Q70 36 102 42M34 28L3 70" fill="none"/></g></svg><span>Se<u>g</u>ment Imported Mesh Body...</span></button>
  </div>

  <!-- Numbered call-outs -->
  <div class="pointer-events-none absolute top-0 left-[3px] h-[71px] w-[109px] rounded-[18px] border-8 border-[#ec1c24]"></div>
  <div class="pointer-events-none absolute top-[141px] left-[13px] h-[68px] w-[208px] rounded-[20px] border-8 border-[#ec1c24]"></div>
  <div class="pointer-events-none absolute top-[898px] left-[364px] h-20 w-[190px] rounded-[22px] border-8 border-[#ec1c24]"></div>
  <span class="absolute top-[21px] left-[134px] font-['DejaVu_Sans_Light','DejaVu_Sans',sans-serif] text-[72px] text-[#ec1c24] [-webkit-text-stroke:2px_#ec1c24]">1</span>
  <span class="absolute top-[156px] left-[240px] font-['DejaVu_Sans_Light','DejaVu_Sans',sans-serif] text-[72px] text-[#ec1c24] [-webkit-text-stroke:2px_#ec1c24]">2</span>
  <span class="absolute top-[901px] left-[568px] font-['DejaVu_Sans_Light','DejaVu_Sans',sans-serif] text-[72px] text-[#ec1c24] [-webkit-text-stroke:2px_#ec1c24]">3</span>
</div>

<script>
  // Coil turns: one set of elliptical arcs per pitch along the cylinder axis
  const coil = document.getElementById('coil');
  const pitch = 11.2;
  let out = '';
  for (let i = -10; i < 26; i++) {
    const at = (k) => {
      const x = 1028 - pitch * (i + k), y = 573 + pitch * (i + k);
      return `M${x} ${y}a66 42 45 0 1 93 93`;
    };
    out += `<path d="${at(0)}v6" stroke="#08090c" stroke-width="3"/>`;
    out += `<path d="${at(0.25)}v5" stroke="#5c5d65" stroke-width="4"/>`;
    out += `<path d="${at(0.55)}" stroke="#6b6b74" stroke-width="3"/>`;
    out += `<path d="${at(0.55)}v4" stroke="#0c0d11" stroke-width="3" stroke-dasharray="7 2 5 2 11 3"/>`;
    out += `<path d="${at(0.8)}" stroke="#55565e" stroke-width="2"/>`;
  }
  coil.innerHTML = `<clipPath id="tube"><path d="M860 742L1030 569Q1050 556 1090 558V705L860 940z"/></clipPath><g clip-path="url(#tube)">${out}</g>`;
</script>
</body>
</html>
